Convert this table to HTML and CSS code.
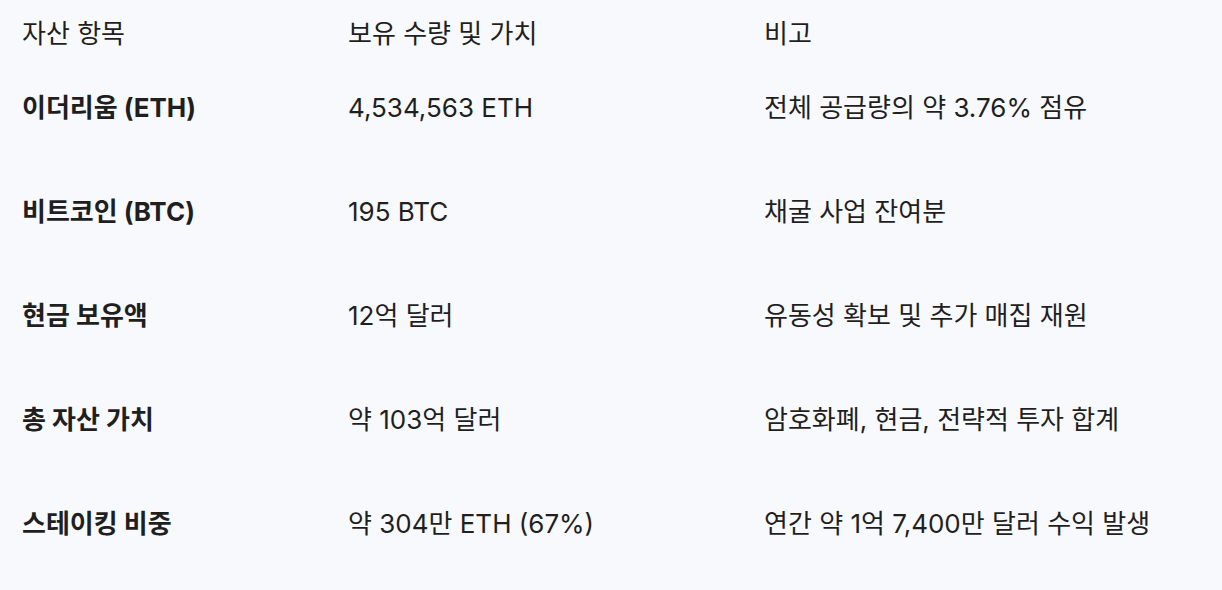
FILE: index.html
```html
<!DOCTYPE html>
<html lang="ko">
<head>
<meta charset="utf-8">
<link rel="stylesheet" href="styles.css">
</head>
<body>
<div class="table">
  <div class="row head">
    <div class="cell">자산 항목</div>
    <div class="cell">보유 수량 및 가치</div>
    <div class="cell">비고</div>
  </div>
  <div class="row">
    <div class="cell name">이더리움 (ETH)</div>
    <div class="cell">4,534,563 ETH</div>
    <div class="cell">전체 공급량의 약 3.76% 점유</div>
  </div>
  <div class="row">
    <div class="cell name">비트코인 (BTC)</div>
    <div class="cell">195 BTC</div>
    <div class="cell">채굴 사업 잔여분</div>
  </div>
  <div class="row">
    <div class="cell name">현금 보유액</div>
    <div class="cell">12억 달러</div>
    <div class="cell">유동성 확보 및 추가 매집 재원</div>
  </div>
  <div class="row">
    <div class="cell name">총 자산 가치</div>
    <div class="cell">약 103억 달러</div>
    <div class="cell">암호화폐, 현금, 전략적 투자 합계</div>
  </div>
  <div class="row">
    <div class="cell name">스테이킹 비중</div>
    <div class="cell">약 304만 ETH (67%)</div>
    <div class="cell">연간 약 1억 7,400만 달러 수익 발생</div>
  </div>
</div>
</body>
</html>
```
FILE: styles.css
```css
html, body {
  margin: 0;
  padding: 0;
  background: #f8f9fc;
}
body {
  font-family: Inter, "Noto Sans CJK KR", sans-serif;
  font-size: 26px;
  color: #1f1f1f;
  width: 1222px;
  height: 590px;
  overflow: hidden;
}
.table {
  display: flex;
  flex-direction: column;
  padding: 12px 0 0 22px;
}
.row {
  display: grid;
  grid-template-columns: 326px 416px 1fr;
  align-items: center;
  height: 104px;
}
.row.head {
  height: 44px;
}
.cell {
  line-height: 32px;
  white-space: nowrap;
}
.name {
  font-weight: 700;
}
```
